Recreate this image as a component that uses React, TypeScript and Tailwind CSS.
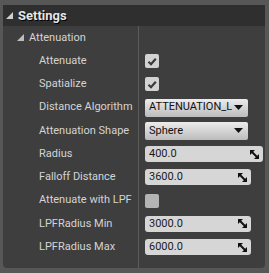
import React from "react";

const Tri = ({ cls }: { cls: string }) => (
  <svg width="7" height="7" viewBox="0 0 7 7" className={cls}>
    <polygon points="7,0 7,7 0,7" fill="currentColor" />
  </svg>
);

const Check = ({ on }: { on: boolean }) => (
  <div className={`w-[14px] h-[14px] rounded-[2px] ${on ? "bg-[#d2d2d2]" : "bg-[#b4b4b4]"} flex items-center justify-center`}>
    {on && (
      <svg width="10" height="9" viewBox="0 0 10 9">
        <polyline points="1.5,4.8 4,7.2 8.8,1.8" fill="none" stroke="#3a3a3a" strokeWidth="2.2" />
      </svg>
    )}
  </div>
);

const Spin = () => (
  <svg width="9" height="9" viewBox="0 0 9 9">
    <polygon points="0,0 5,0 0,5" fill="#111" />
    <polygon points="9,9 4,9 9,4" fill="#111" />
    <line x1="1" y1="1" x2="8" y2="8" stroke="#111" strokeWidth="2" />
  </svg>
);

const Num = ({ v, w }: { v: string; w: string }) => (
  <div className={`${w} h-[16px] rounded-[3px] bg-[#d6d6d6] flex items-center justify-between pl-[4px] pr-[4px] text-[#1a1a1a] text-[11px]`}>
    <span>{v}</span>
    <Spin />
  </div>
);

const Combo = ({ v }: { v: string }) => (
  <div className="w-[103px] h-[18px] rounded-[2px] bg-gradient-to-b from-[#ececec] to-[#bcbcbc] flex items-center justify-between pl-[4px] pr-[5px] text-[#111] text-[11px] overflow-hidden">
    <span className="whitespace-nowrap overflow-hidden w-[83px]">{v}</span>
    <svg width="9" height="5" viewBox="0 0 9 5" className="shrink-0">
      <polygon points="0,0 9,0 4.5,5" fill="#111" />
    </svg>
  </div>
);

const rows: { label: string; el: React.ReactNode }[] = [
  { label: "Attenuate", el: <Check on /> },
  { label: "Spatialize", el: <Check on /> },
  { label: "Distance Algorithm", el: <Combo v="ATTENUATION_Linear" /> },
  { label: "Attenuation Shape", el: <Combo v="Sphere" /> },
  { label: "Radius", el: <Num v="400.0" w="w-[118px]" /> },
  { label: "Falloff Distance", el: <Num v="3600.0" w="w-[106px]" /> },
  { label: "Attenuate with LPF", el: <Check on={false} /> },
  { label: "LPFRadius Min", el: <Num v="3000.0" w="w-[106px]" /> },
  { label: "LPFRadius Max", el: <Num v="6000.0" w="w-[106px]" /> },
];

export default function App() {
  return (
    <div
      className="w-[269px] h-[273px] bg-[#575757] pl-[3px] pr-[4px] pt-[5px] pb-[5px]"
      style={{ fontFamily: "Roboto, 'Noto Sans', sans-serif" }}
    >
      <div className="h-full bg-[#3e3e3e] rounded-b-[4px] flex flex-col overflow-hidden">
        <div className="h-[21px] bg-[#2f2f2f] flex items-center pl-[3px] text-[#e6e6e6]">
          <Tri cls="text-[#cfcfcf] mr-[5px]" />
          <span className="text-[13px] font-bold [text-shadow:1px_1px_0_#000]">Settings</span>
        </div>
        <div className="flex-1 flex">
          <div className="w-[136px] border-r border-[#5a5a5a] flex flex-col">
            <div className="h-[23.5px] flex items-center pl-[14px] text-[#d4d4d4] text-[11px]">
              <Tri cls="text-[#bdbdbd] mr-[5px]" />
              <span>Attenuation</span>
            </div>
            {rows.map((r) => (
              <div key={r.label} className="h-[23.25px] flex items-center pl-[36px] text-[#d4d4d4] text-[11px] whitespace-nowrap">
                {r.label}
              </div>
            ))}
          </div>
          <div className="flex-1 flex flex-col">
            <div className="h-[23.5px]" />
            {rows.map((r) => (
              <div key={r.label} className="h-[23.25px] flex items-center pl-[6px]">
                {r.el}
              </div>
            ))}
          </div>
        </div>
      </div>
    </div>
  );
}
